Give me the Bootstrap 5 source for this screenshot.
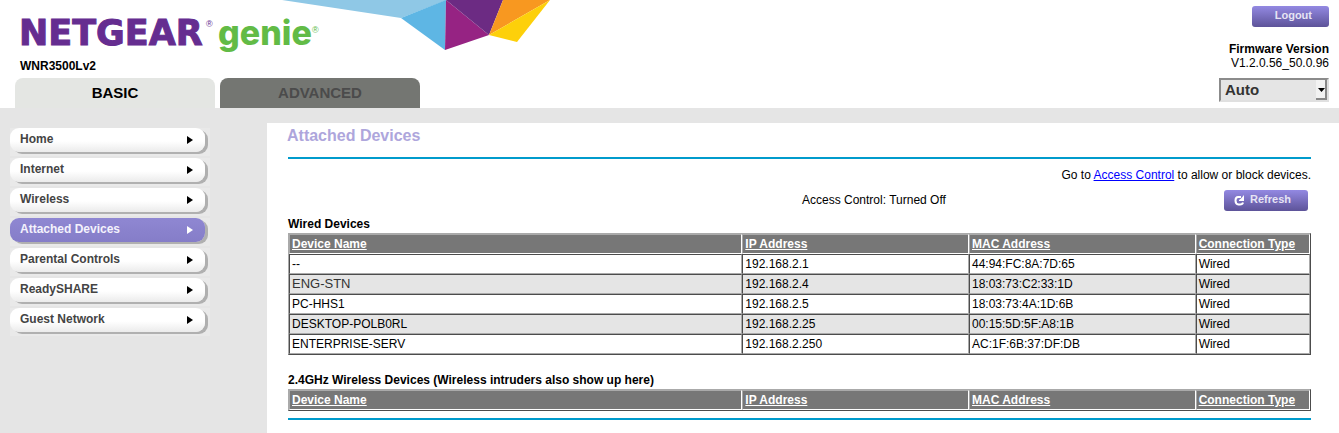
<!DOCTYPE html>
<html lang="en">
<head>
<meta charset="utf-8">
<meta name="viewport" content="width=device-width, initial-scale=1">
<title>NETGEAR Router WNR3500Lv2</title>
<link rel="stylesheet" href="https://cdn.jsdelivr.net/npm/bootstrap@5.3.0/dist/css/bootstrap.min.css">
<style>
  body { font-family: "Liberation Sans", Arial, sans-serif; font-size: 12px; line-height: 14px; color: #000; background: #fff; }
  .page-head { padding: 0 10px 0 15px; }
  .model { padding-left: 5px; margin-bottom: 5px; }
  .mode-tabs { gap: 5px; }
  .tab-btn { width: 200px; height: 30px; border: 0; border-radius: 8px 8px 0 0; font-size: 15px; font-weight: bold; background: #747672; color: #4b4b4b; }
  .tab-btn.active { background: #e4e6e3; color: #000; }
  .tool-btn { height: 21px; border: 0; border-radius: 3px; padding: 0 17px 3px 23px; font-size: 11px; line-height: 18px; font-weight: bold; color: #e6e4f4; background: linear-gradient(#9389e2, #5d5399); }
  .logout-btn { margin: 6px 0 15px; }
  .refresh-btn { padding: 0 17px 3px 10px; gap: 5px; }
  .refresh-btn svg { margin-top: 2px; }
  .lang-select { appearance: none; width: 110px; height: 24px; padding: 0 0 0 4px; border: 2px solid; border-color: #8b8b8b #e0e0e0 #e0e0e0 #8b8b8b; border-radius: 0; font-size: 15px; line-height: 20px; font-weight: bold; color: #333;
    background: #e5e5e5 url("data:image/svg+xml,%3Csvg xmlns='http://www.w3.org/2000/svg' width='11' height='20'%3E%3Cpath fill='%23f2f2f2' d='M0 0h11v20H0z'/%3E%3Cpath d='M10 0v19H0' fill='none' stroke='%23888' stroke-width='2'/%3E%3Cpath d='M2 8h7L5.500 12z'/%3E%3C/svg%3E") right center no-repeat; }
  .page-body { background: #e5e5e5; padding-top: 15px; min-height: calc(100vh - 108px); }
  .side-menu { flex: 0 0 267px; padding: 5px 57px 0 10px; gap: 2px; }
  .menu-cell { background: #e9e9e9; height: 28px; padding-right: 5px; }
  .menu-link { height: 24px; padding: 0 12px 2px 10px; border-radius: 9px; font-weight: bold; color: #444; text-decoration: none; background: linear-gradient(#fff 55%, #ebebeb); box-shadow: 3px 2px 0 #b0b0b0; }
  .menu-link svg { margin-top: 2px; }
  .menu-link.active { color: #f4f2fc; background: linear-gradient(#8f87d2, #857dc8); }
  .main-pane { background: #fff; padding: 0 28px 0 21px; }
  .pane-title { font-size: 16px; line-height: 26px; font-weight: bold; color: #aea6dc; margin: 0 0 8px -1px; }
  .rule { height: 2px; border: 0; margin: 0; opacity: 1; background: #009bcc; }
  .go-line { margin: 9px 0 8px; }
  .go-line a { color: #00f; }
  .status-row { padding-right: 3px; margin-bottom: 6px; }
  .status-text { padding: 0 0 2px 4px; }
  .list-title { font-size: 12px; line-height: 14px; font-weight: bold; margin: 0 0 2px; }
  .device-list { width: 100%; table-layout: fixed; border-collapse: separate; border-spacing: 0; border: 1px solid; border-color: #aaa #4c4c4c #4c4c4c #aaa; }
  .device-list td, .device-list th { height: 20px; padding: 2px; line-height: 14px; border: 1px solid; }
  .device-list td { border-color: #4c4c4c #aaa #aaa #4c4c4c; }
  .device-list th { border-color: #aaa #fff #fff #aaa; background: #777; color: #fff; text-decoration: underline; }
  .device-list tbody tr:nth-child(even) { background: #e5e5e5; }
  .device-list .renamed { font-size: 13px; color: #333; }
  .w-name { width: 44.4%; } .w-addr { width: 22.2%; }
  .list-gap { margin-top: 18px; }
  .end-rule { margin-top: 7px; }
</style>
<script src="https://cdn.jsdelivr.net/npm/bootstrap@5.3.0/dist/js/bootstrap.bundle.min.js"></script>
</head>
<body>
<header class="page-head d-flex justify-content-between">
  <div>
    <svg class="d-block" width="536" height="59" viewBox="15 0 536 59" role="img" aria-label="NETGEAR genie">
      <path fill="#8fc8e6" d="M282 0H447L401 18z"/>
      <path fill="#5eb6e4" d="M401 18L446 0L445 50z"/>
      <path fill="#962383" d="M446 0L489 35L445 50z"/>
      <path fill="#6c2b83" d="M446 0H503L489 35z"/>
      <path fill="#f89820" d="M503 0H550L489 35z"/>
      <path fill="#fdd00a" d="M550 0L489 35L517 42z"/>
      <g fill="#652d90">
        <text x="19" y="45" font-family="DejaVu Sans, sans-serif" font-weight="700" font-size="35" stroke="#652d90" stroke-width="1">NETGEAR</text>
        <text x="206" y="27" font-family="Liberation Sans, sans-serif" font-size="9">®</text>
      </g>
      <g fill="#62bb46">
        <text x="218" y="45" font-family="Inter, sans-serif" font-weight="800" font-size="34">genie</text>
        <text x="312" y="33" font-family="Liberation Sans, sans-serif" font-size="9">®</text>
      </g>
    </svg>
    <div class="model fw-bold">WNR3500Lv2</div>
    <nav class="mode-tabs d-flex" aria-label="Mode">
      <button type="button" class="tab-btn active">BASIC</button>
      <button type="button" class="tab-btn">ADVANCED</button>
    </nav>
  </div>
  <div class="d-flex flex-column align-items-end text-end">
    <button type="button" class="tool-btn logout-btn">Logout</button>
    <div class="fw-bold">Firmware Version</div>
    <div>V1.2.0.56_50.0.96</div>
    <select class="lang-select mt-2" aria-label="Language"><option>Auto</option><option>English</option></select>
  </div>
</header>

<div class="page-body d-flex">
  <nav class="side-menu d-flex flex-column" aria-label="Basic settings">
    <div class="menu-cell"><a href="#" class="menu-link d-flex align-items-center justify-content-between">Home<svg width="6" height="8"><path fill="#000" d="M0 0L6 4L0 8z"/></svg></a></div>
    <div class="menu-cell"><a href="#" class="menu-link d-flex align-items-center justify-content-between">Internet<svg width="6" height="8"><path fill="#000" d="M0 0L6 4L0 8z"/></svg></a></div>
    <div class="menu-cell"><a href="#" class="menu-link d-flex align-items-center justify-content-between">Wireless<svg width="6" height="8"><path fill="#000" d="M0 0L6 4L0 8z"/></svg></a></div>
    <div class="menu-cell"><a href="#" class="menu-link active d-flex align-items-center justify-content-between">Attached Devices<svg width="6" height="8"><path fill="#fff" d="M0 0L6 4L0 8z"/></svg></a></div>
    <div class="menu-cell"><a href="#" class="menu-link d-flex align-items-center justify-content-between">Parental Controls<svg width="6" height="8"><path fill="#000" d="M0 0L6 4L0 8z"/></svg></a></div>
    <div class="menu-cell"><a href="#" class="menu-link d-flex align-items-center justify-content-between">ReadySHARE<svg width="6" height="8"><path fill="#000" d="M0 0L6 4L0 8z"/></svg></a></div>
    <div class="menu-cell"><a href="#" class="menu-link d-flex align-items-center justify-content-between">Guest Network<svg width="6" height="8"><path fill="#000" d="M0 0L6 4L0 8z"/></svg></a></div>
  </nav>

  <main class="main-pane flex-grow-1">
    <h1 class="pane-title">Attached Devices</h1>
    <hr class="rule">
    <p class="go-line text-end">Go to <a href="#">Access Control</a> to allow or block devices.</p>
    <div class="status-row row g-0">
      <div class="col-6 offset-6 d-flex justify-content-between align-items-center">
        <span class="status-text">Access Control: Turned Off</span>
        <button type="button" class="tool-btn refresh-btn d-flex align-items-center">
          <svg width="11" height="11" viewBox="0 0 11 11"><path fill="none" stroke="#fff" stroke-width="2" d="M7 2H4Q1.500 2 1.500 5.500T4.500 9.500H6Q8.500 9.500 9 7.500"/><path fill="#fff" d="M10 0V6H5V5L7 3.500z"/></svg>Refresh
        </button>
      </div>
    </div>
    <h2 class="list-title">Wired Devices</h2>
    <table class="device-list">
      <thead><tr><th class="w-name">Device Name</th><th class="w-addr">IP Address</th><th class="w-addr">MAC Address</th><th>Connection Type</th></tr></thead>
      <tbody>
        <tr><td>--</td><td>192.168.2.1</td><td>44:94:FC:8A:7D:65</td><td>Wired</td></tr>
        <tr><td class="renamed">ENG-STN</td><td>192.168.2.4</td><td>18:03:73:C2:33:1D</td><td>Wired</td></tr>
        <tr><td>PC-HHS1</td><td>192.168.2.5</td><td>18:03:73:4A:1D:6B</td><td>Wired</td></tr>
        <tr><td>DESKTOP-POLB0RL</td><td>192.168.2.25</td><td>00:15:5D:5F:A8:1B</td><td>Wired</td></tr>
        <tr><td>ENTERPRISE-SERV</td><td>192.168.2.250</td><td>AC:1F:6B:37:DF:DB</td><td>Wired</td></tr>
      </tbody>
    </table>
    <h2 class="list-title list-gap">2.4GHz Wireless Devices (Wireless intruders also show up here)</h2>
    <table class="device-list">
      <thead><tr><th class="w-name">Device Name</th><th class="w-addr">IP Address</th><th class="w-addr">MAC Address</th><th>Connection Type</th></tr></thead>
    </table>
    <hr class="rule end-rule">
  </main>
</div>
</body>
</html>
